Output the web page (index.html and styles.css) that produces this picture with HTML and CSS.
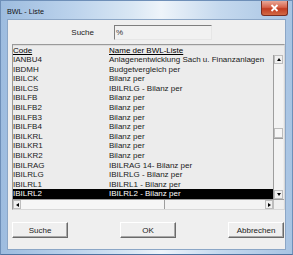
FILE: index.html
```html
<!DOCTYPE html>
<html lang="de">
<head>
    <meta charset="UTF-8">
    <title>BWL - Liste</title>
    <link rel="stylesheet" href="styles.css">
</head>
<body>
    <div class="window">
        <div class="titlebar">
            <span class="title">BWL - Liste</span>
            <div class="close">
                <svg width="9" height="8" viewBox="0 0 9 8"><path d="M1.5 1 L7.5 7 M7.5 1 L1.5 7" stroke="#fff" stroke-width="1.8"/></svg>
            </div>
        </div>

        <div class="client">
            <div class="search-row">
                <label>Suche</label>
                <div class="search-input">%</div>
            </div>

            <div class="listbox">
                <div class="list-head">
                    <span class="c1">Code</span><span class="c2">Name der BWL-Liste</span>
                </div>
                <div class="list-body">
                    <div class="rows">
                        <div class="row"><span class="c1">IANBU4</span><span class="c2">Anlagenentwicklung Sach u. Finanzanlagen</span></div>
                        <div class="row"><span class="c1">IBDMH</span><span class="c2">Budgetvergleich per</span></div>
                        <div class="row"><span class="c1">IBILCK</span><span class="c2">Bilanz per</span></div>
                        <div class="row"><span class="c1">IBILCS</span><span class="c2">IBILRLG - Bilanz per</span></div>
                        <div class="row"><span class="c1">IBILFB</span><span class="c2">Bilanz per</span></div>
                        <div class="row"><span class="c1">IBILFB2</span><span class="c2">Bilanz per</span></div>
                        <div class="row"><span class="c1">IBILFB3</span><span class="c2">Bilanz per</span></div>
                        <div class="row"><span class="c1">IBILFB4</span><span class="c2">Bilanz per</span></div>
                        <div class="row"><span class="c1">IBILKRL</span><span class="c2">Bilanz per</span></div>
                        <div class="row"><span class="c1">IBILKR1</span><span class="c2">Bilanz per</span></div>
                        <div class="row"><span class="c1">IBILKR2</span><span class="c2">Bilanz per</span></div>
                        <div class="row"><span class="c1">IBILRAG</span><span class="c2">IBILRAG 14- Bilanz per</span></div>
                        <div class="row"><span class="c1">IBILRLG</span><span class="c2">IBILRLG - Bilanz per</span></div>
                        <div class="row"><span class="c1">IBILRL1</span><span class="c2">IBILRL1 - Bilanz per</span></div>
                        <div class="row selected"><span class="c1">IBILRL2</span><span class="c2">IBILRL2 - Bilanz per</span></div>
                    </div>
                    <div class="vscroll">
                        <div class="sb-btn"><i class="arr up"></i></div>
                        <div class="v-track"></div>
                        <div class="v-thumb"></div>
                        <div class="v-track rest"></div>
                        <div class="sb-btn"><i class="arr down"></i></div>
                    </div>
                </div>
                <div class="hscroll">
                    <div class="hbar">
                        <div class="sb-btn h"><i class="arr left"></i></div>
                        <div class="h-thumb"></div>
                        <div class="h-track"></div>
                        <div class="sb-btn h"><i class="arr right"></i></div>
                    </div>
                    <div class="corner"></div>
                </div>
            </div>

            <div class="buttons">
                <button class="btn">Suche</button>
                <button class="btn">OK</button>
                <button class="btn">Abbrechen</button>
            </div>
        </div>
    </div>
</body>
</html>
```

FILE: styles.css
```css
* { margin: 0; padding: 0; box-sizing: border-box; }
body {
    font-family: "Liberation Sans", Arial, sans-serif;
    font-size: 8px;
    color: #000;
    background: #fff;
}

.window {
    width: 293px;
    height: 255px;
    padding: 0 6px 5px 6px;
    background: linear-gradient(90deg, #9dbcdf 0%, #bcd3ec 25%, #d9e7f4 45%, #eef4fa 55%, #c5d9ee 75%, #a8c4e3 100%);
    border: 1px solid #6e8fb8;
    border-bottom-color: #4f72a0;
}

.titlebar {
    height: 18px;
    display: flex;
    align-items: center;
    justify-content: space-between;
}
.title {
    font-size: 7.2px;
    padding-left: 0;
    margin-top: 2px;
    color: #111;
}
.close {
    width: 27px;
    height: 15px;
    margin-top: -3px;
    margin-right: -2px;
    background: linear-gradient(180deg, #e9a898 0%, #d7644c 45%, #c23c21 55%, #d26a45 100%);
    border: 1px solid #7a2d21;
    border-top: none;
    border-radius: 0 0 3px 3px;
    display: flex;
    align-items: center;
    justify-content: center;
}

.client {
    width: 279px;
    height: 231px;
    background: #efefef;
    border: 1px solid #8ba6c6;
}

.search-row {
    display: flex;
    align-items: center;
    margin-top: 5px;
    height: 15px;
}
.search-row label {
    width: 106px;
    padding-right: 20px;
    text-align: right;
    color: #222;
}
.search-input {
    width: 98px;
    height: 15px;
    border-top: 1px solid #7e7e7e;
    border-left: 1px solid #7e7e7e;
    border-bottom: 1px solid #e6e6e6;
    border-right: 1px solid #e6e6e6;
    background: #f1f1f1;
    padding: 1px 0 0 1px;
    line-height: 11px;
    color: #333;
}

.listbox {
    margin: 4px 0 0 4px;
    width: 273px;
    height: 166px;
    border: 1px solid #9a9a9a;
    border-right-color: #d8d8d8;
    border-bottom-color: #d8d8d8;
    background: #ececec;
}

.list-head {
    height: 10px;
    display: flex;
    line-height: 9px;
    border-top: 1px solid #dcdcdc;
}
.list-head span { text-decoration: underline; }
.c1 { width: 96px; flex-shrink: 0; }
.c2 { white-space: nowrap; }

.list-body {
    height: 144px;
    display: flex;
}
.rows {
    width: 260px;
    overflow: hidden;
}
.row {
    height: 9.6px;
    line-height: 9.6px;
    display: flex;
    color: #1a1a1a;
}
.row.selected {
    background: #000;
    color: #fff;
}

.vscroll {
    width: 10px;
    display: flex;
    flex-direction: column;
    border-left: 1px solid #9e9e9e;
}
.sb-btn {
    height: 9px;
    background: #f0f0f0;
    border: 1px solid #bdbdbd;
    display: flex;
    align-items: center;
    justify-content: center;
}
.v-track {
    height: 64px;
    background: #f3f3f3;
}
.v-track.rest {
    flex: 1;
    height: auto;
    border-top: 1px solid #9e9e9e;
}
.v-thumb {
    height: 10px;
    background: #f6f6f6;
    border: 1px solid #bcbcbc;
}

.hscroll {
    height: 10px;
    display: flex;
    border-top: 1px solid #9e9e9e;
}
.hbar {
    width: 260px;
    display: flex;
}
.sb-btn.h {
    width: 8px;
    height: 9px;
}
.h-thumb {
    width: 144px;
    background: #f6f6f6;
    border-right: 1px solid #9e9e9e;
}
.h-track {
    flex: 1;
    background: #f3f3f3;
}
.corner {
    width: 10px;
    background: #efefef;
    border-left: 1px solid #bdbdbd;
}

.arr { width: 0; height: 0; display: block; }
.arr.up { border-left: 2.5px solid transparent; border-right: 2.5px solid transparent; border-bottom: 3px solid #000; }
.arr.down { border-left: 2.5px solid transparent; border-right: 2.5px solid transparent; border-top: 3px solid #000; }
.arr.left { border-top: 2.5px solid transparent; border-bottom: 2.5px solid transparent; border-right: 3px solid #000; }
.arr.right { border-top: 2.5px solid transparent; border-bottom: 2.5px solid transparent; border-left: 3px solid #000; }

.buttons {
    margin: 12px 0 0 4px;
    width: 272px;
    display: flex;
    justify-content: space-between;
}
.btn {
    width: 56px;
    height: 16px;
    font-family: "Liberation Sans", Arial, sans-serif;
    font-size: 8px;
    color: #222;
    background: #efefef;
    border-top: 1px solid #fff;
    border-left: 1px solid #fff;
    border-right: 1px solid #6a6a6a;
    border-bottom: 1px solid #6a6a6a;
    box-shadow: inset -1px -1px 0 #a8a8a8;
}
```
